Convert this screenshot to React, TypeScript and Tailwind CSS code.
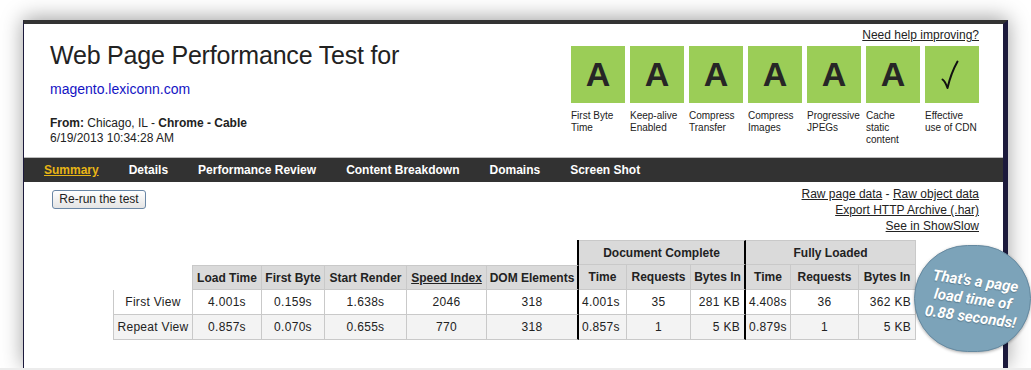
import React from 'react'

const grades = [
  { grade: 'A', label: 'First Byte Time' },
  { grade: 'A', label: 'Keep-alive Enabled' },
  { grade: 'A', label: 'Compress Transfer' },
  { grade: 'A', label: 'Compress Images' },
  { grade: 'A', label: 'Progressive JPEGs' },
  { grade: 'A', label: 'Cache static content' },
  { grade: 'check', label: 'Effective use of CDN' },
]

const navItems = ['Summary', 'Details', 'Performance Review', 'Content Breakdown', 'Domains', 'Screen Shot']

const rows = [
  ['First View', '4.001s', '0.159s', '1.638s', '2046', '318', '4.001s', '35', '281 KB', '4.408s', '36', '362 KB'],
  ['Repeat View', '0.857s', '0.070s', '0.655s', '770', '318', '0.857s', '1', '5 KB', '0.879s', '1', '5 KB'],
]

const heads = ['Load Time', 'First Byte', 'Start Render', 'Speed Index', 'DOM Elements', 'Time', 'Requests', 'Bytes In', 'Time', 'Requests', 'Bytes In']

// column 5 (DOM Elements) and 8 (doc Bytes In) carry the thick black divider
const thick = (i: number) => i === 5 || i === 8

const Check = () => (
  <svg width="18" height="30" viewBox="0 0 18 30" fill="none" className="ml-[-4px]">
    <path d="M1.5 19.5 Q4 21 6.5 28 Q10 13 16.5 1.5" stroke="#111" strokeWidth="2" strokeLinecap="round" strokeLinejoin="round" />
  </svg>
)

const App = () => {
  return (
    <div className="relative h-[370px] w-[1031px] overflow-hidden border-b-2 border-[#ececec] bg-white pl-[23px] pt-[20px] font-['Liberation_Sans',Arial,sans-serif] text-[#222]">
      <div className="h-[348px] w-[985px] border-l border-r-[5px] border-t-4 border-l-[#1c1a3c] border-r-[#1c1a3c] border-t-[#333] bg-white shadow-[0_-2px_20px_rgba(0,0,0,0.38)]">
        {/* header */}
        <div className="flex h-[133px] justify-between">
          <div className="pl-[26px] pt-[17px]">
            <h1 className="text-[25px] leading-[29px] tracking-[-0.2px] text-[#222]">Web Page Performance Test for</h1>
            <a href="#" className="mt-[11px] block text-[14px] leading-[17px] text-[#1414c4]">
              magento.lexiconn.com
            </a>
            <div className="mt-[18px] text-[12px] leading-[15px]">
              <p>
                <b>From:</b> Chicago, IL - <b>Chrome - Cable</b>
              </p>
              <p>6/19/2013 10:34:28 AM</p>
            </div>
          </div>
          <div className="flex flex-col items-end pr-[24px] pt-[4px]">
            <a href="#" className="text-[12px] leading-[14px] text-[#222] underline">
              Need help improving?
            </a>
            <div className="mt-[4px] flex gap-[5px]">
              {grades.map((g) => (
                <div key={g.label} className="w-[54px]">
                  <div className="flex h-[57px] w-[54px] items-center justify-center bg-[#9bcd57] text-[34px] font-bold text-[#262626]">
                    {g.grade === 'check' ? <Check /> : g.grade}
                  </div>
                  <p className="mt-[7px] text-[10px] leading-[12px] text-[#222]">{g.label}</p>
                </div>
              ))}
            </div>
          </div>
        </div>

        {/* nav */}
        <div className="flex h-[25px] items-center gap-[30px] border-t border-[#bdbdbd] bg-[#323232] pl-[20px] text-[12px] font-bold leading-[24px]">
          {navItems.map((n, i) => (
            <a key={n} href="#" className={i === 0 ? 'text-[#e8b516] underline' : 'text-white'}>
              {n}
            </a>
          ))}
        </div>

        {/* actions */}
        <div className="mt-[4px] flex justify-between pl-[28px] pr-[24px]">
          <button
            type="button"
            className="mt-[4px] h-[19px] w-[94px] rounded-[3px] border border-[#6a87a6] bg-gradient-to-b from-white to-[#e4e4e4] text-[12px] leading-[17px] text-[#222]"
          >
            Re-run the test
          </button>
          <div className="flex flex-col items-end text-[12px] leading-[16px]">
            <p>
              <a href="#" className="underline">Raw page data</a> - <a href="#" className="underline">Raw object data</a>
            </p>
            <a href="#" className="underline">Export HTTP Archive (.har)</a>
            <a href="#" className="underline">See in ShowSlow</a>
          </div>
        </div>

        {/* results table */}
        <div className="ml-[89px] mt-[6px] grid grid-cols-[80px_69px_63px_82px_80px_92px_48px_64px_55px_45px_68px_57px] grid-rows-[25px_25px_25px_25px] text-[12px]">
          <div className="col-span-6 border-r-2 border-r-black" />
          <div className="col-span-3 flex items-center justify-center border-b border-r-2 border-t border-b-[#c9c9c9] border-r-black border-t-[#c9c9c9] bg-[#dadada] font-bold">
            Document Complete
          </div>
          <div className="col-span-3 flex items-center justify-center border-b border-r border-t border-[#c9c9c9] bg-[#dadada] font-bold">
            Fully Loaded
          </div>

          <div className="border-r border-[#c9c9c9]" />
          {heads.map((h, i) => (
            <div
              key={i}
              className={`flex items-center justify-center border-b border-b-[#c9c9c9] bg-[#dadada] font-bold ${
                thick(i + 1) ? 'border-r-2 border-r-black' : 'border-r border-r-[#c9c9c9]'
              } ${i < 5 ? 'border-t border-t-[#c9c9c9]' : ''}`}
            >
              <span className={i === 3 ? 'underline' : ''}>{h}</span>
            </div>
          ))}

          {rows.map((r, ri) =>
            r.map((c, ci) => (
              <div
                key={`${ri}-${ci}`}
                className={`flex items-center border-b border-b-[#c9c9c9] tracking-[0.3px] ${ri === 1 ? 'bg-[#f3f3f3]' : 'bg-white'} ${
                  thick(ci) ? 'border-r-2 border-r-black' : 'border-r border-r-[#c9c9c9]'
                } ${ci === 0 ? 'border-l border-l-[#c9c9c9]' : ''} ${
                  ci === 6 || ci === 9 ? 'justify-start pl-[3px]' : ci === 8 || ci === 11 ? 'justify-end pr-[4px]' : 'justify-center'
                }`}
              >
                {c}
              </div>
            ))
          )}
        </div>
      </div>

      {/* callout */}
      <div className="absolute left-[914px] top-[245px] flex h-[107px] w-[117px] items-center justify-center rounded-full border border-[#6589a0] bg-[#7ca3b9] shadow-[0_1px_3px_rgba(0,0,0,0.3)]">
        <p className="rotate-[8deg] text-center font-['Roboto',sans-serif] text-[15px] font-bold italic leading-[18px] text-white [text-shadow:0_1px_1px_rgba(0,0,0,0.25)]">
          That's a page
          <br />
          load time of
          <br />
          0.88 seconds!
        </p>
      </div>
    </div>
  )
}

export default App
